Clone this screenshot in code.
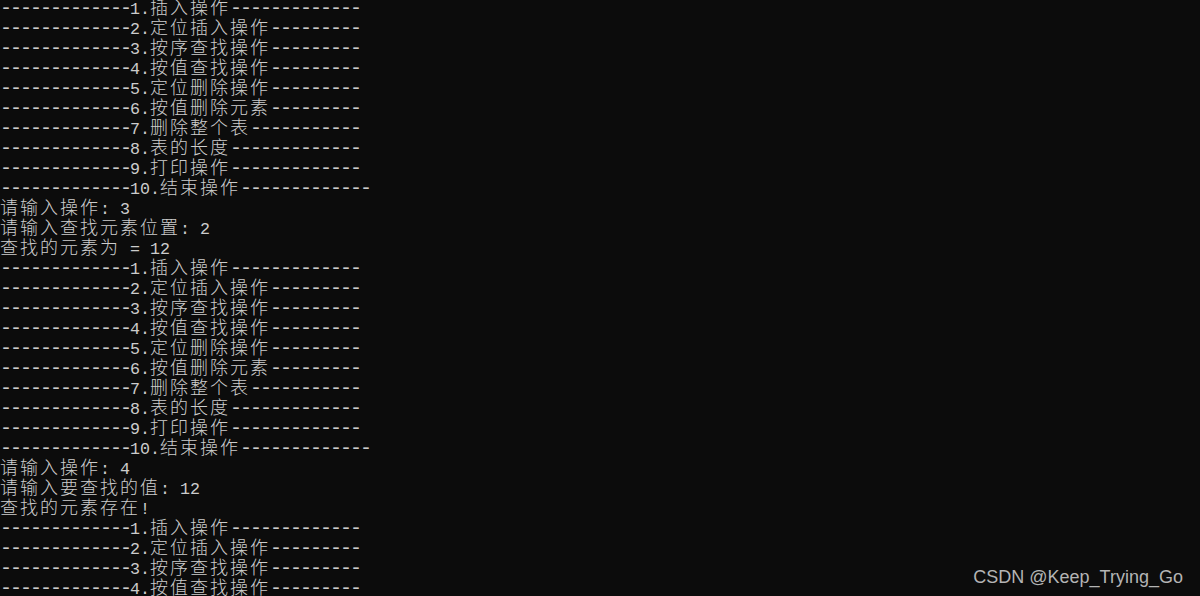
const menu = [
  "-------------1.插入操作-------------",
  "-------------2.定位插入操作---------",
  "-------------3.按序查找操作---------",
  "-------------4.按值查找操作---------",
  "-------------5.定位删除操作---------",
  "-------------6.按值删除元素---------",
  "-------------7.删除整个表-----------",
  "-------------8.表的长度-------------",
  "-------------9.打印操作-------------",
  "-------------10.结束操作-------------",
];

const lines = [
  ...menu,
  "请输入操作: 3",
  "请输入查找元素位置: 2",
  "查找的元素为 = 12",
  ...menu,
  "请输入操作: 4",
  "请输入要查找的值: 12",
  "查找的元素存在!",
  ...menu.slice(0, 4),
];

function runs(text) {
  const out = [];
  const re = /[\u3000-\u9fff\uff00-\uffef]+|-+|[^\u3000-\u9fff\uff00-\uffef-]+/g;
  let m;
  while ((m = re.exec(text))) out.push(m[0]);
  return out;
}

function Line({ text }) {
  return (
    <div className="h-[20px] leading-[20px] whitespace-pre">
      {runs(text).map((r, i) => {
        if (/[\u3000-\u9fff]/.test(r))
          return (
            <span
              key={i}
              className="text-[18px] tracking-[2px] font-['Noto_Sans_CJK_SC',sans-serif]"
            >
              {r}
            </span>
          );
        if (r[0] === "-")
          return (
            <span
              key={i}
              className="text-[20px] tracking-[-2px] font-['Liberation_Mono',monospace]"
            >
              {r}
            </span>
          );
        return (
          <span
            key={i}
            className="text-[16.667px] font-['Liberation_Mono',monospace]"
          >
            {r}
          </span>
        );
      })}
    </div>
  );
}

export default function App() {
  return (
    <div className="relative w-[1200px] h-[596px] overflow-hidden bg-[#0c0c0c] text-[#cccccc]">
      <div className="-mt-[4px] font-light">
        {lines.map((l, i) => (
          <Line key={i} text={l} />
        ))}
      </div>
      <div className="absolute right-[17px] bottom-[10px] text-[18px] leading-none text-[#b4b4b4] font-['Liberation_Sans',sans-serif]">
        CSDN @Keep_Trying_Go
      </div>
    </div>
  );
}
